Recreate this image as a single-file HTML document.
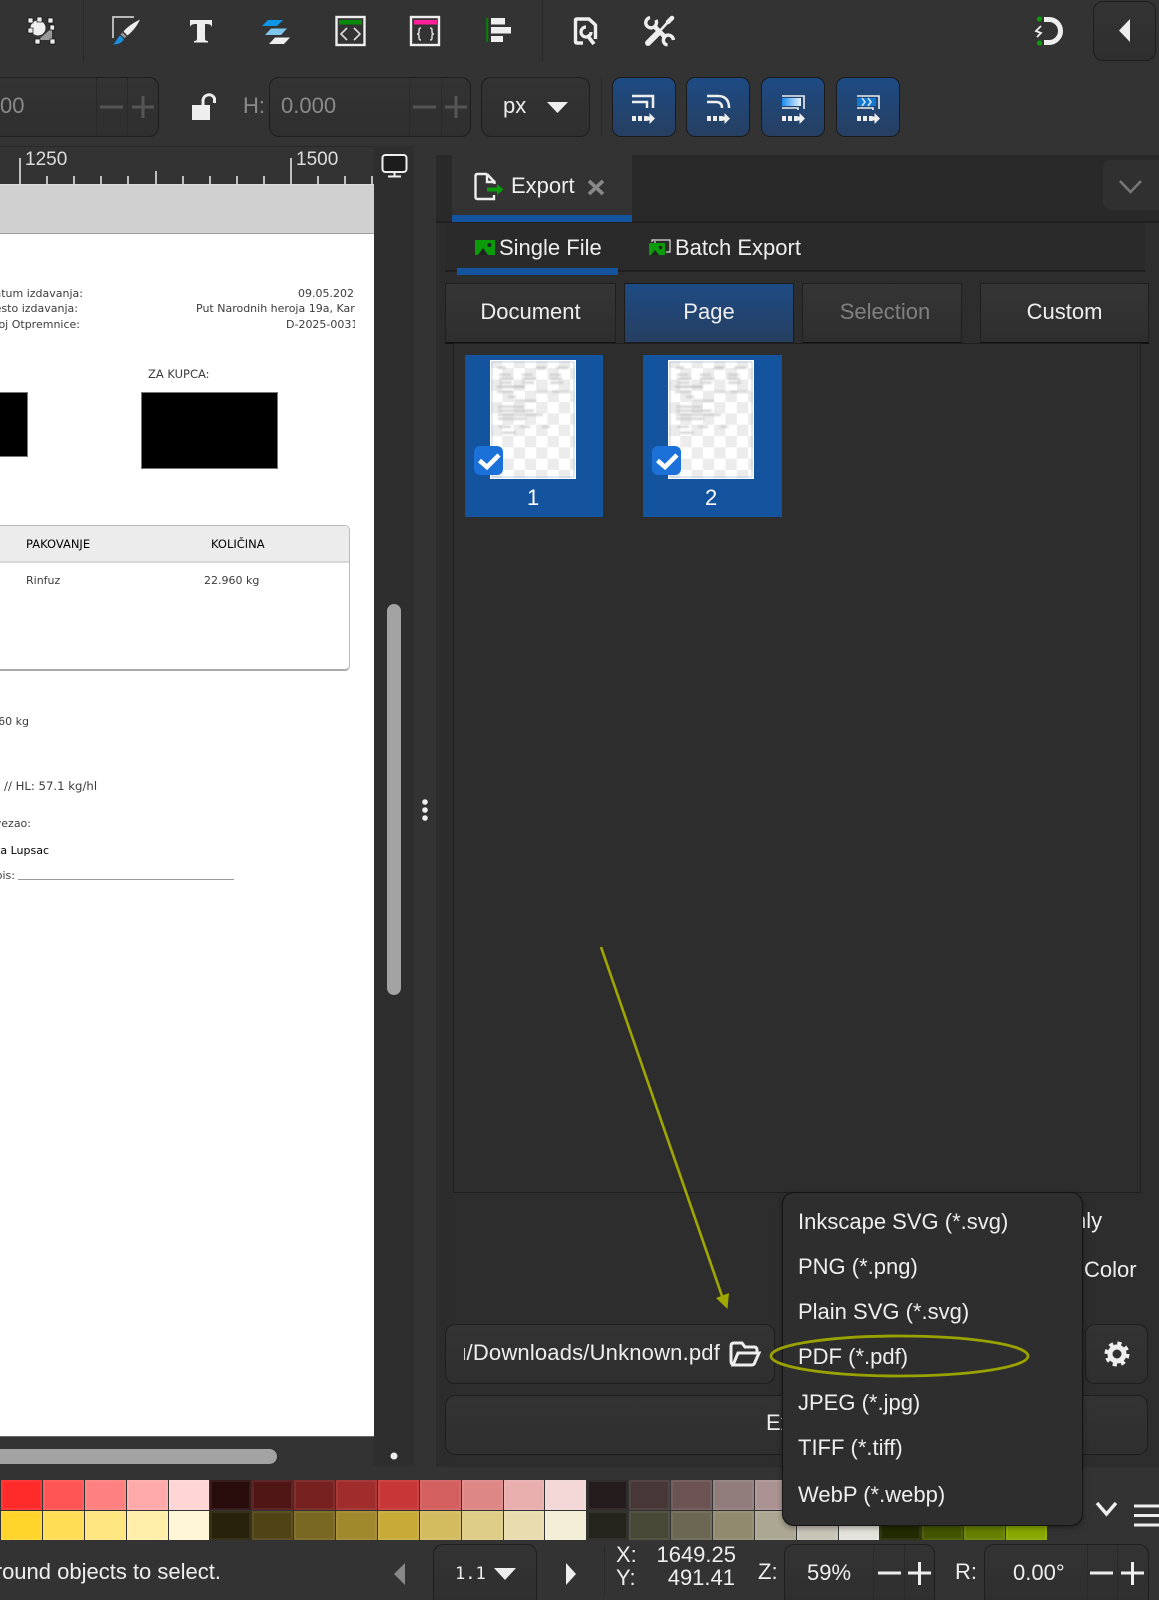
<!DOCTYPE html>
<html><head><meta charset="utf-8"><title>Inkscape Export</title>
<style>
*{box-sizing:border-box}
html,body{margin:0;padding:0;width:1159px;height:1600px;overflow:hidden;background:#333;font-family:"Liberation Sans",sans-serif;color:#eee}
#root{position:absolute;left:0;top:0;width:1159px;height:1600px;overflow:hidden}
.a{position:absolute}
.t{position:absolute;white-space:nowrap;font-size:22px;line-height:22px}
.box{position:absolute;border:1.5px solid #1e1e1e;border-radius:10px;background:linear-gradient(#333,#2f2f2f)}
.low{height:56px;border-bottom:0;border-radius:10px 10px 0 0}
.sep{position:absolute;width:1px;background:#2a2a2a}
.blue{position:absolute;top:77px;height:60px;width:64px;border-radius:9px;border:1.5px solid #1a1a1a;background:linear-gradient(#1e4b84,#263f61)}
.seg{position:absolute;top:283px;height:61px;font-size:22px;line-height:56px;text-align:center;border:1.5px solid #1f1f1f;border-bottom:2px solid #111;background:linear-gradient(#353535,#2e2e2e)}
.doc{position:absolute;white-space:nowrap;font-family:"DejaVu Sans",sans-serif;font-size:11px;line-height:12px;color:#3c3c3c;filter:blur(.25px)}
.pal{position:absolute;left:1px;top:1480px;width:1046px;height:60px;display:grid;grid-template-columns:repeat(25,1fr);grid-template-rows:1fr 1fr;gap:1px}
.pal i{display:block;box-shadow:inset 0 0 0 2px rgba(255,255,255,.07)}
.item{position:absolute;left:15px;white-space:nowrap;font-size:22px;line-height:24px;color:#eee}
</style></head>
<body>
<div id="root">

<!-- canvas -->
<div class="a" style="left:0;top:146px;width:374px;height:1px;background:#2a2a2a"></div>
<div class="a" style="left:0;top:184px;width:374px;height:1px;background:#ddd"></div>
<div class="a" style="left:0;top:185px;width:374px;height:48px;background:#d0d0d0"></div>
<div class="a" style="left:0;top:233px;width:374px;height:1px;background:#a0a0a0"></div>
<div class="a" style="left:0;top:234px;width:374px;height:1202px;background:#fff"></div>
<div class="a" style="left:0;top:1436px;width:374px;height:1px;background:#666"></div>
<div class="t" style="left:25px;top:150px;font-size:19px;line-height:19px;color:#ddd">1250</div>
<div class="t" style="left:296px;top:150px;font-size:19px;line-height:19px;color:#ddd">1500</div>

<!-- document text -->
<div class="doc" style="right:1076px;top:288px">atum izdavanja:</div>
<div class="doc" style="right:1081px;top:303px">esto izdavanja:</div>
<div class="doc" style="right:1079px;top:319px">oj Otpremnice:</div>
<div class="a" style="left:180px;top:280px;width:175px;height:60px;overflow:hidden">
  <div class="doc" style="left:118px;top:8px">09.05.2025</div>
  <div class="doc" style="left:16px;top:23px">Put Narodnih heroja 19a, Kart</div>
  <div class="doc" style="left:106px;top:39px">D-2025-0031</div>
</div>
<div class="doc" style="left:148px;top:368px;font-size:11.5px">ZA KUPCA:</div>
<div class="a" style="left:0;top:392px;width:28px;height:65px;background:#000;border:1px solid #777;border-left:0"></div>
<div class="a" style="left:141px;top:392px;width:137px;height:77px;background:#000;border:1px solid #777"></div>
<div class="a" style="left:0;top:525px;width:350px;height:146px;border:1px solid #bbb;border-left:0;border-bottom:2px solid #aaa;border-radius:0 5px 5px 0;background:#fff;overflow:hidden">
  <div class="a" style="left:0;top:0;right:0;height:37px;background:#ececec;border-bottom:2px solid #d8d8d8"></div>
</div>
<div class="doc" style="left:26px;top:538px;color:#000;font-size:11.500px">PAKOVANJE</div>
<div class="doc" style="left:211px;top:538px;color:#000;font-size:11.500px">KOLIČINA</div>
<div class="doc" style="left:26px;top:575px">Rinfuz</div>
<div class="doc" style="left:204px;top:575px">22.960 kg</div>
<div class="doc" style="right:1130px;top:716px">60 kg</div>
<div class="doc" style="left:4px;top:780px;font-size:11.700px">// HL: 57.1 kg/hl</div>
<div class="doc" style="right:1128px;top:818px">vezao:</div>
<div class="doc" style="right:1110px;top:845px;color:#000">ka Lupsac</div>
<div class="doc" style="right:1144px;top:870px">pis:</div>
<div class="a" style="left:18px;top:879px;width:216px;height:1px;background:#999"></div>

<!-- columns -->
<div class="a" style="left:374px;top:146px;width:40px;height:1320px;background:#2e2e2e"></div>
<div class="a" style="left:386.500px;top:604px;width:14.500px;height:391px;border-radius:8px;background:#a3a3a3"></div>
<div class="a" style="left:0;top:1449px;width:277px;height:15px;border-radius:0 8px 8px 0;background:#a3a3a3"></div>

<!-- right panel -->
<div class="a" style="left:436px;top:155px;width:723px;height:1312px;background:#2d2d2d"></div>
<div class="a" style="left:436px;top:155px;width:723px;height:67px;background:#292929"></div>
<div class="a" style="left:436px;top:222px;width:16px;height:1245px;background:#2c2c2c"></div>
<div class="a" style="left:436px;top:221px;width:723px;height:2px;background:#202020"></div>
<div class="a" style="left:452px;top:155px;width:180px;height:67px;background:#333;border-bottom:7px solid #14539e"></div>
<div class="t" style="left:511px;top:175px">Export</div>
<div class="a" style="left:1103px;top:160px;width:56px;height:50px;border-radius:8px 0 0 8px;background:#303030"></div>

<div class="a" style="left:445px;top:223px;width:700px;height:49px;background:#2a2a2a;border-bottom:2px solid #1f1f1f"></div>
<div class="a" style="left:457px;top:268px;width:161px;height:7px;background:#14539e"></div>
<div class="t" style="left:499px;top:237px">Single File</div>
<div class="t" style="left:675px;top:237px">Batch Export</div>

<div class="seg" style="left:445px;width:171px">Document</div>
<div class="seg" style="left:624px;width:170px;background:linear-gradient(#1e4b84,#263f61);border-color:#1b1b1b">Page</div>
<div class="seg" style="left:802px;width:160px;color:#808080;padding-left:6px">Selection</div>
<div class="seg" style="left:980px;width:169px">Custom</div>

<div class="a" style="left:453px;top:343px;width:688px;height:850px;border:1.5px solid #1f1f1f;background:#2d2d2d"></div>
<div class="a" style="left:465px;top:355px;width:138px;height:162px;background:#14539e"></div>
<div class="a" style="left:643px;top:355px;width:139px;height:162px;background:#14539e"></div>
<div class="t" style="left:527px;top:487px;color:#fff">1</div>
<div class="t" style="left:705px;top:487px;color:#fff">2</div>

<div class="t" style="left:1074px;top:1210px">nly</div>
<div class="t" style="left:1084px;top:1259px">Color</div>

<div class="box" style="left:445px;top:1324px;width:330px;height:60px"></div>
<div class="a" style="left:464px;top:1340px;width:256px;height:28px;overflow:hidden">
  <div class="t" style="right:0;top:2px;letter-spacing:.18px">/Users/mu/Downloads/Unknown.pdf</div>
</div>
<div class="box" style="left:1085px;top:1324px;width:63px;height:60px"></div>
<div class="box" style="left:445px;top:1395px;width:703px;height:60px"></div>
<div class="t" style="left:766px;top:1412px">Export</div>

<!-- toolbars -->
<div class="sep" style="left:83px;top:0;height:62px"></div>
<div class="sep" style="left:542px;top:0;height:62px"></div>
<div class="sep" style="left:601px;top:77px;height:60px"></div>
<div class="box" style="left:1093px;top:1px;width:63px;height:60px"></div>

<div class="box" style="left:0;top:77px;width:159px;height:60px;border-left:0;border-radius:0 10px 10px 0"></div>
<div class="sep" style="left:96px;top:78px;height:58px"></div>
<div class="sep" style="left:127px;top:78px;height:58px"></div>
<div class="t" style="left:0;top:95px;color:#8a8a8a">00</div>
<div class="t" style="left:243px;top:95px;color:#8a8a8a">H:</div>
<div class="box" style="left:269px;top:77px;width:202px;height:60px"></div>
<div class="sep" style="left:409px;top:78px;height:58px"></div>
<div class="sep" style="left:441px;top:78px;height:58px"></div>
<div class="t" style="left:281px;top:95px;color:#8a8a8a">0.000</div>
<div class="box" style="left:481px;top:77px;width:109px;height:60px"></div>
<div class="t" style="left:503px;top:95px">px</div>
<div class="blue" style="left:612px"></div>
<div class="blue" style="left:686px"></div>
<div class="blue" style="left:761px"></div>
<div class="blue" style="left:836px"></div>

<!-- palette -->
<div class="pal">
<i style="background:#ff2a2a"></i><i style="background:#f55"></i><i style="background:#ff8080"></i><i style="background:#faa"></i><i style="background:#ffd5d5"></i><i style="background:#280b0b"></i><i style="background:#501616"></i><i style="background:#782121"></i><i style="background:#a02c2c"></i><i style="background:#c83737"></i><i style="background:#d35f5f"></i><i style="background:#de8787"></i><i style="background:#e9afaf"></i><i style="background:#f4d7d7"></i><i style="background:#241c1c"></i><i style="background:#483737"></i><i style="background:#6c5353"></i><i style="background:#917c7c"></i><i style="background:#ac9393"></i><i style="background:#c8b7b7"></i><i style="background:#e3dbdb"></i><i style="background:#280b0b"></i><i style="background:#501616"></i><i style="background:#782121"></i><i style="background:#a02c2c"></i>
<i style="background:#ffd42a"></i><i style="background:#fd5"></i><i style="background:#ffe680"></i><i style="background:#fea"></i><i style="background:#fff6d5"></i><i style="background:#28220b"></i><i style="background:#504416"></i><i style="background:#786721"></i><i style="background:#a0892c"></i><i style="background:#c8ab37"></i><i style="background:#d3bc5f"></i><i style="background:#decd87"></i><i style="background:#e9ddaf"></i><i style="background:#f4eed7"></i><i style="background:#24241c"></i><i style="background:#484837"></i><i style="background:#6c6753"></i><i style="background:#918a6f"></i><i style="background:#aca793"></i><i style="background:#c8c4b7"></i><i style="background:#e3e2db"></i><i style="background:#222b00"></i><i style="background:#445500"></i><i style="background:#668000"></i><i style="background:#8a0"></i>
</div>

<!-- status bar -->
<div class="a" style="left:0;top:1555px;width:221px;height:34px;overflow:hidden"><div class="t" style="right:0;top:6px">round objects to select.</div></div>
<div class="box low" style="left:433px;top:1544px;width:104px"></div>
<div class="t" style="left:455px;top:1564px;font-family:'DejaVu Sans Mono',monospace;font-size:17px;line-height:20px">1.1</div>
<div class="sep" style="left:604px;top:1546px;height:50px"></div>
<div class="t" style="left:616px;top:1544px">X:</div>
<div class="t" style="left:616px;top:1567px">Y:</div>
<div class="t" style="right:423px;top:1544px">1649.25</div>
<div class="t" style="right:424px;top:1567px">491.41</div>
<div class="t" style="left:758px;top:1561px">Z:</div>
<div class="box low" style="left:784px;top:1544px;width:151px"></div>
<div class="sep" style="left:873px;top:1545px;height:55px"></div>
<div class="sep" style="left:904px;top:1545px;height:55px"></div>
<div class="t" style="left:807px;top:1562px">59%</div>
<div class="t" style="left:955px;top:1561px">R:</div>
<div class="box low" style="left:984px;top:1544px;width:165px"></div>
<div class="sep" style="left:1087px;top:1545px;height:55px"></div>
<div class="sep" style="left:1117px;top:1545px;height:55px"></div>
<div class="t" style="left:1013px;top:1562px">0.00°</div>

<!-- icons -->
<svg class="a" style="left:0;top:0" width="1159" height="1600" viewBox="0 0 1159 1600" fill="none">
<defs>
<pattern id="chk" width="22.600" height="22.600" patternUnits="userSpaceOnUse" x="1" y="-3.100"><rect width="22.600" height="22.600" fill="#fff"/><rect width="11.300" height="11.300" fill="#ececec"/><rect x="11.300" y="11.300" width="11.300" height="11.300" fill="#ececec"/></pattern>
<filter id="bl"><feGaussianBlur stdDeviation="1"/></filter>
<linearGradient id="bg"><stop offset="0" stop-color="#1a8cf0"/><stop offset="1" stop-color="#e8f3ff"/></linearGradient>
<symbol id="prev" width="86" height="119" viewBox="0 0 86 119" overflow="visible">
<rect width="86" height="119" fill="url(#chk)"/>
<rect x=".5" y=".5" width="85" height="118" fill="none" stroke="#fff"/>
<rect x="2" y="2" width="82" height="115" fill="none" stroke="#b6c6de" stroke-width=".8"/>
<g filter="url(#bl)" fill="#bbb">
<rect x="8" y="7" width="8" height="1.5"/><rect x="46" y="7" width="10" height="2"/><rect x="66" y="7" width="12" height="1.5"/>
<rect x="9" y="14" width="12" height="1.5"/><rect x="32" y="14" width="11" height="1.5"/><rect x="60" y="14" width="11" height="1.5"/>
<rect x="9" y="18" width="14" height="1.5"/><rect x="32" y="18" width="14" height="1.5"/><rect x="60" y="18" width="12" height="1.5"/>
<rect x="9" y="22" width="13" height="1.5"/><rect x="32" y="22" width="12" height="1.5"/><rect x="60" y="22" width="13" height="1.5"/>
<rect x="7" y="26" width="28" height="1.5" fill="#aaa"/>
<rect x="7" y="31" width="16" height="1.5"/><rect x="46" y="31" width="12" height="1.5"/><rect x="62" y="31" width="18" height="1.5"/>
<rect x="18" y="36" width="8" height="1.5"/><rect x="24" y="40" width="22" height="1.5"/>
<rect x="8" y="46" width="26" height="1.5"/><rect x="8" y="50" width="36" height="1.5"/>
<rect x="8" y="54" width="45" height="1.5"/><rect x="8" y="58" width="28" height="1.5"/>
<rect x="9" y="66" width="12" height="1.5"/><rect x="30" y="66" width="10" height="1.5"/><rect x="52" y="66" width="8" height="1.5"/>
<rect x="12" y="72" width="14" height="1.5"/>
</g>
</symbol>
<symbol id="arr" width="24" height="12" viewBox="0 0 24 12" overflow="visible">
<path fill="#eee" d="M0 3h4v5H0zM6 3h4v5H6zM12 3h3.500v5H12zM15.500 3.500h2V0l5.500 5.500L17.500 11V7.500h-2z"/>
</symbol>
<symbol id="chkb" width="30" height="30" viewBox="0 0 30 30" overflow="visible">
<rect width="29" height="29" rx="6" fill="#1c71d8"/>
<path d="M5.500 14.500 L13 21 L25 9" stroke="#fff" stroke-width="4.500"/>
</symbol>
</defs>

<!-- ruler ticks -->
<path stroke="#eee" stroke-width="1.500" d="M20 158V184M291 158V184M156 171V184M47 176V184M74 176V184M101 176V184M128 176V184M183 176V184M210 176V184M237 176V184M264 176V184M318 176V184M345 176V184M372 176V184"/>

<!-- object tool -->
<polygon points="52,28 52,40 38,40" fill="#999"/>
<circle cx="38" cy="28" r="7.500" fill="#eee"/>
<g fill="#eee" stroke="#111" stroke-width=".7">
<rect x="28" y="18" width="5" height="5"/><rect x="37" y="17" width="5" height="5"/><rect x="48" y="18" width="5" height="5"/><rect x="28" y="28" width="5" height="5"/><rect x="50" y="25" width="4.500" height="5"/><rect x="35" y="39" width="5" height="5"/><rect x="50" y="39" width="5" height="5"/>
</g>
<!-- brush -->
<path stroke="#ccc" stroke-width="1.700" d="M113 38V17H134"/>
<path fill="#eee" d="M140 19.500 C135 22 128 26 123.500 31.500 L127.500 35.500 C133 31 137 26 140 19.500Z"/>
<path fill="#999" d="M122.500 32.500L126.500 36.500L124.500 38L120.500 34.500Z"/>
<path fill="#1a8fe0" d="M120 35.500 L124 39 C122 43 118 44.500 113 44.500 C116 42.500 117 38 120 35.500Z"/>
<!-- text -->
<path fill="#eee" d="M190 20H212V27Q211 24 207 24H205V39Q205 41 208 41V42.500H194V41Q197 41 197 39V24H195Q191 24 190 27Z"/>
<!-- layers -->
<polygon points="268,20 283,20 277,26 262,26" fill="#0d95e8"/>
<polygon points="271,28.500 287,28.500 281,35 265,35" fill="#7fc6ec"/>
<polygon points="275,37.500 290,37.500 284,44 269,44" fill="#eee"/>
<!-- xml -->
<rect x="336.500" y="17" width="28" height="28" stroke="#eee" stroke-width="2.400"/>
<rect x="339" y="20" width="23" height="4.500" fill="#0a8a0a"/>
<path stroke="#ddd" stroke-width="1.600" d="M347 28 L341 34 L347 40M354 28 L360 34 L354 40"/>
<!-- css -->
<rect x="411" y="17" width="28" height="28" stroke="#eee" stroke-width="2.400"/>
<rect x="414" y="20" width="23" height="4.500" fill="#ff1f9b"/>
<path stroke="#ddd" stroke-width="1.500" d="M421 28q-2 0-2 2v2q0 2-2 2q2 0 2 2v2q0 2 2 2M430 28q2 0 2 2v2q0 2 2 2q-2 0-2 2v2q0 2-2 2"/>
<!-- align -->
<rect x="486" y="18" width="2.200" height="24" fill="#0a7a0a"/>
<path fill="#eee" d="M491 18h14v6.500h-14zM491 27h20v6.500h-20zM491 36h12v6h-12z"/>
<!-- doc wrench -->
<path stroke="#eee" stroke-width="3.400" stroke-linejoin="round" d="M583 43H577Q575.500 43 575.500 41.500V20.500Q575.500 19 577 19H589L595.500 25V39"/>
<path stroke="#eee" stroke-width="3.200" d="M586 27a5 5 0 1 0 5 5"/>
<path stroke="#eee" stroke-width="3.800" d="M587 35L594 44"/>
<!-- tools -->
<path stroke="#eee" stroke-width="6" stroke-linecap="round" d="M648 43L658 33"/>
<path stroke="#eee" stroke-width="2.600" d="M658 33L668 22"/>
<path stroke="#eee" stroke-width="4.500" stroke-linecap="round" d="M668 22L672 18"/>
<path stroke="#eee" stroke-width="4.500" d="M654 26L666 38"/>
<path stroke="#eee" stroke-width="3.400" d="M650 17.500a5.500 5.500 0 0 0-4 7a5.500 5.500 0 0 0 8 2.500a5.500 5.500 0 0 0 2-7M673.500 40a5.500 5.500 0 0 0-7.500-4.500a5.500 5.500 0 0 0-1.500 8a5.500 5.500 0 0 0 3 1.500"/>
<!-- magnet -->
<path stroke="#eee" stroke-width="5" d="M1044 19.500H1049A11.500 11.500 0 0 1 1049 42.500H1044"/>
<circle cx="1039.500" cy="19" r="2.600" fill="#0a9a0a"/><circle cx="1039.500" cy="43" r="2.600" fill="#0a9a0a"/>
<path stroke="#eee" stroke-width="1.800" d="M1041 26L1036 31L1041 33L1037 37"/>
<!-- collapse -->
<polygon points="1130,19 1130,42 1119,30.500" fill="#eee"/>
<!-- minus plus top -->
<path stroke="#555" stroke-width="3" d="M100 107H123M132 107H154M143 96V118M413 107H436M445 107H467M456 96V118"/>
<!-- lock -->
<rect x="192" y="105" width="18" height="15" fill="#eee"/>
<path stroke="#eee" stroke-width="3" d="M203 105V100a6 6 0 0 1 11.500-1.500V103"/>
<polygon points="547,102 568,102 557.500,113" fill="#eee"/>
<!-- blue buttons -->
<path stroke="#eee" stroke-width="2.500" d="M632 96H653V108M632 102H647V108"/>
<use href="#arr" x="632" y="113"/>
<path stroke="#eee" stroke-width="2.500" d="M707 96H718Q729 96 729 108M707 102H716Q722 102 722 108"/>
<use href="#arr" x="707" y="113"/>
<rect x="782" y="98" width="19" height="8" fill="url(#bg)"/>
<path stroke="#eee" stroke-width="1.600" d="M782 96H804V109M782 108H798V110"/>
<use href="#arr" x="782" y="113"/>
<rect x="857" y="98" width="19" height="8" fill="#1278d0"/>
<path stroke="#cfe6ff" stroke-width="1.500" d="M862 98l3 4-3 4M868 98l3 4-3 4"/>
<path stroke="#eee" stroke-width="1.600" d="M857 96H879V109M857 108H873V110"/>
<use href="#arr" x="857" y="113"/>
<!-- monitor -->
<rect x="382.500" y="155" width="24" height="17" rx="3" stroke="#eee" stroke-width="2" fill="#1c1c1c"/>
<path stroke="#eee" stroke-width="2" d="M394.500 172V176M388 176.500H401"/>
<!-- grip + dot -->
<circle cx="425" cy="802" r="2.800" fill="#eee"/><circle cx="425" cy="810" r="2.800" fill="#eee"/><circle cx="425" cy="818" r="2.800" fill="#eee"/>
<circle cx="394" cy="1456" r="3.500" fill="#eee"/>
<!-- export icon -->
<path stroke="#eee" stroke-width="2.400" d="M487 174H477.500Q475.500 174 475.500 176V197Q475.500 199 477.500 199H494V195M487 174V182H494.500V184M487 174L494.500 182"/>
<path fill="#0a9a0a" d="M487 187.500H497V184L503.500 189.500L497 195V191.500H487Z"/>
<path stroke="#888" stroke-width="3.600" d="M589 181L603 194M603 181L589 194"/>
<path stroke="#777" stroke-width="2.600" d="M1120 181L1130.500 192L1141 181"/>
<!-- single file -->
<rect x="475" y="240" width="20" height="15" fill="#0a9a0a"/>
<path fill="#222" d="M478 255L483 248L488 255Z"/><circle cx="489.500" cy="245" r="2" fill="#222"/>
<!-- batch -->
<path stroke="#ddd" stroke-width="1.200" d="M652 242V240H670V252H666M655 243V241"/>
<rect x="649" y="243" width="16" height="12" fill="#0a9a0a"/>
<path fill="#222" d="M651 255L655 250L659 255Z"/><circle cx="660.500" cy="247.500" r="1.800" fill="#222"/>
<!-- previews -->
<use href="#prev" x="490" y="360"/>
<use href="#prev" x="668" y="360"/>
<use href="#chkb" x="474" y="446"/>
<use href="#chkb" x="652" y="446"/>
<!-- folder -->
<path stroke="#eee" stroke-width="3" d="M733 1364Q731 1364 731 1361V1346Q731 1343 734 1343H742L745 1347H754Q757 1347 757 1350V1353M733 1365L738 1353H759L755 1362Q754 1365 752 1365Z"/>
<!-- gear -->
<circle cx="1117" cy="1354" r="7" stroke="#eee" stroke-width="5"/>
<circle cx="1117" cy="1354" r="10.500" stroke="#eee" stroke-width="4" stroke-dasharray="4.100 4.150"/>
<!-- status icons -->
<polygon points="405,1563 405,1585 394,1574" fill="#888"/>
<polygon points="566,1563 566,1585 576,1574" fill="#eee"/>
<polygon points="494,1568 516,1568 505,1580" fill="#eee"/>
<path stroke="#eee" stroke-width="3" d="M878 1573H901M908 1573H931M919.500 1562V1585M1090 1573H1113M1121 1573H1144M1132.500 1562V1585"/>
<path stroke="#eee" stroke-width="3.400" d="M1097 1503L1106.500 1514L1116 1503"/>
<path stroke="#eee" stroke-width="3" d="M1134 1506H1159M1134 1515.500H1159M1134 1525H1159"/>
</svg>

<!-- dropdown -->
<div class="a" style="left:782px;top:1192px;width:301px;height:334px;background:#2e2e2e;border:1.500px solid #141414;border-radius:12px;box-shadow:0 2px 6px rgba(0,0,0,.35)">
  <div class="item" style="top:17px">Inkscape SVG (*.svg)</div>
  <div class="item" style="top:62px">PNG (*.png)</div>
  <div class="item" style="top:107px">Plain SVG (*.svg)</div>
  <div class="item" style="top:152px">PDF (*.pdf)</div>
  <div class="item" style="top:198px">JPEG (*.jpg)</div>
  <div class="item" style="top:243px">TIFF (*.tiff)</div>
  <div class="item" style="top:290px">WebP (*.webp)</div>
</div>

<!-- annotations -->
<svg class="a" style="left:0;top:0" width="1159" height="1600" viewBox="0 0 1159 1600" fill="none">
<path stroke="#a0a800" stroke-width="2.600" d="M601 947L722 1296"/>
<polygon points="727.500,1309 716,1298 729,1293" fill="#a0a800"/>
<ellipse cx="899.500" cy="1356" rx="128.500" ry="20" stroke="#9aa200" stroke-width="2.800"/>
</svg>
</div>
</body></html>
